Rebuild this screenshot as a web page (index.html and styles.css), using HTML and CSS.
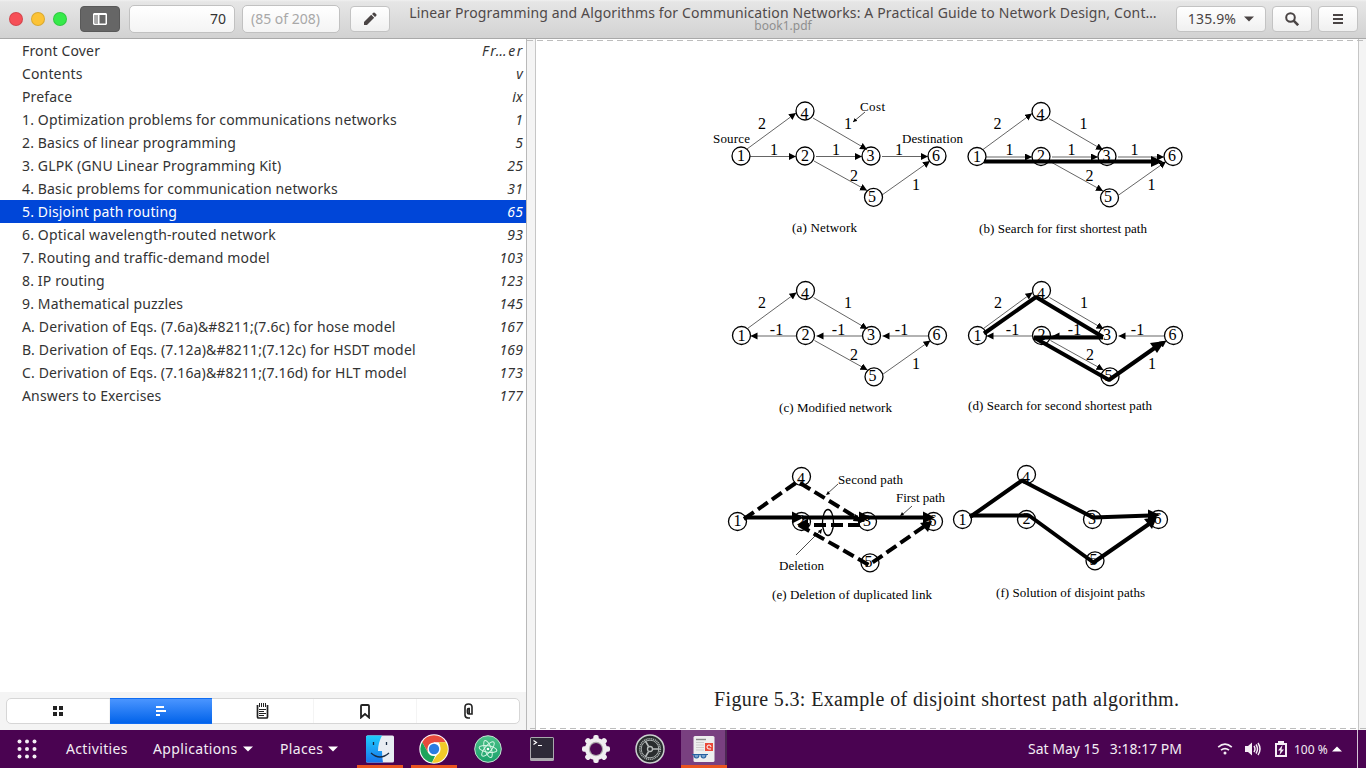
FILE: index.html
```html
<!DOCTYPE html>
<html lang="en">
<head>
<meta charset="utf-8">
<title>book1.pdf</title>
<link rel="stylesheet" href="styles.css">
</head>
<body>
<div class="screen">
  <header class="titlebar">
    <div class="lights"><i class="light red"></i><i class="light yellow"></i><i class="light green"></i></div>
    <button class="btn dark"><svg width="14" height="12" viewBox="0 0 14 12"><path fill="#fff" fill-rule="evenodd" d="M1 0h12l1 1v10l-1 1H1l-1-1V1zM1.500 2v8.500H5V2zM6.500 2v8.500h6V2z"/><path fill="#aaa" d="M2 2h3v8.500H2z"/></svg></button>
    <div class="entry page-no">70</div>
    <div class="entry page-total">(85 of 208)</div>
    <button class="btn pencil"><svg width="14" height="14" viewBox="0 0 14 14" fill="#4a4444"><path d="M1 13v-3l7.200-7.200 3 3L4 13zM9 2l1.300-1.300q.7-.6 1.400 0l1.600 1.600q.6.700 0 1.400L12 5z"/></svg></button>
    <div class="heading"><div class="doc-title">Linear Programming and Algorithms for Communication Networks: A Practical Guide to Network Design, Cont…</div><div class="doc-file">book1.pdf</div></div>
    <button class="btn zoom"><span>135.9%</span><svg width="10" height="6"><path fill="#4a4444" d="M0 .5h10L5 5.500z"/></svg></button>
    <button class="btn"><svg width="14" height="14" viewBox="0 0 14 14" fill="none" stroke="#4a4444"><circle cx="5.500" cy="5.500" r="4.300" stroke-width="2"/><path stroke-width="2.600" d="M8.600 8.600l4.600 4.600"/></svg></button>
    <button class="btn"><svg width="10" height="10" fill="#4a4444"><path d="M0 0h10v2H0zM0 4h10v2H0zM0 8h10v2H0z"/></svg></button>
  </header>

  <main class="work">
    <aside class="sidebar">
      <ul class="outline">
        <li><span>Front Cover</span><em class="short">Fr…er</em></li>
        <li><span>Contents</span><em>v</em></li>
        <li><span>Preface</span><em>ix</em></li>
        <li><span>1. Optimization problems for communications networks</span><em>1</em></li>
        <li><span>2. Basics of linear programming</span><em>5</em></li>
        <li><span>3. GLPK (GNU Linear Programming Kit)</span><em>25</em></li>
        <li><span>4. Basic problems for communication networks</span><em>31</em></li>
        <li class="selected"><span>5. Disjoint path routing</span><em>65</em></li>
        <li><span>6. Optical wavelength-routed network</span><em>93</em></li>
        <li><span>7. Routing and traffic-demand model</span><em>103</em></li>
        <li><span>8. IP routing</span><em>123</em></li>
        <li><span>9. Mathematical puzzles</span><em>145</em></li>
        <li><span>A. Derivation of Eqs. (7.6a)&amp;#8211;(7.6c) for hose model</span><em>167</em></li>
        <li><span>B. Derivation of Eqs. (7.12a)&amp;#8211;(7.12c) for HSDT model</span><em>169</em></li>
        <li><span>C. Derivation of Eqs. (7.16a)&amp;#8211;(7.16d) for HLT model</span><em>173</em></li>
        <li><span>Answers to Exercises</span><em>177</em></li>
      </ul>
      <div class="switcher-wrap"><div class="switcher">
        <div class="tab"><svg width="10" height="10" fill="#222"><path d="M0 0h4v4H0zM6 0h4v4H6zM0 6h4v4H0zM6 6h4v4H6z"/></svg></div>
        <div class="tab active"><svg width="10" height="10" fill="#fff"><path d="M0 0h8v2H0zM0 4h10v2H0zM0 8h4v2H0z"/></svg></div>
        <div class="tab"><svg width="13" height="16" viewBox="0 0 13 16" fill="none" stroke="#222"><path stroke-width="1.700" d="M1.500 2v12q0 1 1 1h8q1 0 1-1V2"/><path d="M3.500 0v4M5.500 0v4M7.500 0v4M9.500 0v4M3 6.500h7M3 8.500h5M3 10.500h7M3 12.500h5"/></svg></div>
        <div class="tab"><svg width="10" height="15" viewBox="0 0 10 15" fill="none" stroke="#222" stroke-width="1.800"><path d="M1 13.500V2q0-1 1-1h6q1 0 1 1v11.500L5 10z"/></svg></div>
        <div class="tab"><svg width="9" height="16" viewBox="0 0 9 16" fill="none" stroke="#222" stroke-width="1.600"><path d="M6 15H4q-3-.3-3-3V4q0-3 3.500-3T8 4v7H5.200V5.500H4.500Q3.400 5.500 3.400 7v2.500q0 1.500 1.600 1.500"/></svg></div>
      </div></div>
    </aside>

    <section class="viewer">
      <svg class="sheet" width="839" height="691" viewBox="527 39 839 691">
        <defs>
          <marker id="thin" markerUnits="userSpaceOnUse" markerWidth="8" markerHeight="8" refX="7" refY="3.500" orient="auto"><path d="M0 0l7 3.500-7 3.500z"/></marker>
          <marker id="bold" markerUnits="userSpaceOnUse" markerWidth="13" markerHeight="12" refX="2" refY="5.500" orient="auto"><path d="M0 0l12 5.500L0 11z"/></marker>
          <marker id="tiny" markerUnits="userSpaceOnUse" markerWidth="5" markerHeight="4" refX="4" refY="2" orient="auto"><path d="M0 0l4 2-4 2z"/></marker>
          <g id="nodes" class="node"><circle cx="741" cy="156" r="9"/><circle cx="805" cy="156" r="9"/><circle cx="871" cy="156" r="9"/><circle cx="805" cy="111" r="9"/><circle cx="873.500" cy="197.300" r="9"/><circle cx="937" cy="156" r="9"/></g>
          <g id="diagonals" class="link"><path d="M747 149L796 113"/><path d="M813 118L867 149.500"/><path d="M814 161L867 190.500"/><path d="M882 195L930 161"/></g>
          <g id="digits" class="num"><text x="741" y="161">1</text><text x="805" y="160.500">2</text><text x="870.500" y="160.500">3</text><text x="804.500" y="119">4</text><text x="872" y="201.500">5</text><text x="936" y="160.500">6</text></g>
          <g id="outer" class="num"><text x="762" y="129">2</text><text x="848" y="129">1</text><text x="854" y="181">2</text><text x="916" y="190">1</text></g>
          <g id="inner" class="num"><text x="774" y="155">1</text><text x="836" y="155">1</text><text x="899" y="155">1</text></g>
          <g id="forward" class="link"><path d="M750 156.500H796"/><path d="M816 156.500H862"/><path d="M882 156.500H928"/></g>
          <g id="back"><g class="link"><path d="M796 156.500H750"/><path d="M862 156.500H816"/><path d="M928 156.500H882"/></g><g class="num"><text x="776" y="155">-1</text><text x="838" y="155">-1</text><text x="901" y="155">-1</text></g></g>
        </defs>
        <rect x="535" y="39" width="823" height="691" fill="#fff"/>
        <path d="M535.500 39v691M1358.500 39v691" stroke="#c6c6c6"/>
        <path d="M527 40.500h839M530 728.500h836" stroke="#bdbdbd" stroke-dasharray="6 4"/>

        <g id="fig-a"><use href="#nodes"/><use href="#diagonals"/><use href="#forward"/><use href="#digits"/><use href="#outer"/><use href="#inner"/>
          <g class="cap"><text x="713" y="143" textLength="37">Source</text><text x="860" y="111" textLength="25">Cost</text><text x="902" y="143" textLength="61">Destination</text><text x="792" y="232" textLength="65">(a) Network</text></g>
          <path d="M865 112l-12 10" stroke="#000" stroke-width=".7" marker-end="url(#tiny)"/></g>

        <g id="fig-b"><g transform="translate(236 .5)"><use href="#nodes"/><use href="#diagonals"/><use href="#forward"/><use href="#digits"/></g><use href="#outer" x="235.500"/><use href="#inner" x="235.500"/>
          <path class="thick" d="M984 161.500H1153" marker-end="url(#bold)"/><g class="cap"><text x="979" y="233" textLength="168">(b) Search for first shortest path</text></g></g>

        <g id="fig-c"><g transform="translate(.5 179.500)"><use href="#nodes"/><use href="#diagonals"/><use href="#back"/><use href="#digits"/></g><use href="#outer" y="179"/>
          <g class="cap"><text x="779" y="412" textLength="113">(c) Modified network</text></g></g>

        <g id="fig-d"><g transform="translate(236.500 179.500)"><use href="#nodes"/><use href="#diagonals"/><use href="#back"/><use href="#digits"/></g><use href="#outer" x="236" y="179"/>
          <path class="thick" d="M984 333.500L1036 297L1103 337"/><path class="thick" d="M1103 337.500H1034L1109 380L1156 347" /><path d="M1165 341l-8 12-7-10z"/>
          <g class="cap"><text x="968" y="410" textLength="184">(d) Search for second shortest path</text></g></g>

        <g id="fig-e"><use href="#nodes" x="-3.500" y="365.500"/><use href="#digits" x="-3.500" y="365"/>
          <path class="thick" d="M744 517.500H792M802 517.500H858M868 517.500H924"/><path d="M792 511.500l12 6-12 6zM859 511.500l12 6-12 6zM923 511.500l12 6-12 6z"/>
          <path class="thick dash" d="M744 519L800 480"/><path class="thick dash" d="M800 483L862 521"/><path class="thick dash" d="M860 525H807"/><path class="thick dash" d="M799 525L869 565L926 525"/>
          <path d="M797 524.500l11-6v12zM932 521l-4 11-8-9zM855 514l10 8-12-1z"/>
          <ellipse cx="828" cy="522.500" rx="5.500" ry="13" fill="none" stroke="#000" stroke-width="1.300"/>
          <path d="M796 555L822 529M838 484l-11 10M912 506l-10 9" stroke="#000" stroke-width=".7"/><path d="M822 529l-1 5-3-3zM826 495l2-4 2 3zM900 516l2-4 2 3z"/>
          <g class="cap"><text x="838" y="484" textLength="65">Second path</text><text x="896" y="502" textLength="49">First path</text><text x="779" y="570" textLength="45">Deletion</text><text x="772" y="599" textLength="160">(e) Deletion of duplicated link</text></g></g>

        <g id="fig-f"><use href="#nodes" x="221.500" y="363.500"/><use href="#digits" x="221.500" y="363.500"/>
          <path class="thick" d="M970 517L1022 480.500L1093 517.500L1150 515.500"/><path class="thick" d="M970 515.500H1029L1093.500 562.500L1149 524"/>
          <path d="M1148 509.500l12 5.500-12 6zM1157 517l-5 12-8-10z"/>
          <g class="cap"><text x="996" y="597" textLength="149">(f) Solution of disjoint paths</text></g></g>

        <text class="figure-title" x="714" y="706" textLength="465">Figure 5.3: Example of disjoint shortest path algorithm.</text>
      </svg>
    </section>
  </main>

  <footer class="panel">
    <svg class="grid-icon" width="20" height="20" fill="#f5f0f5"><g id="dots"><circle cx="2.500" cy="2.500" r="2"/><circle cx="10" cy="2.500" r="2"/><circle cx="17.500" cy="2.500" r="2"/></g><use href="#dots" y="7.500"/><use href="#dots" y="15"/></svg>
    <span class="menu activities">Activities</span>
    <span class="menu applications">Applications</span><svg class="caret" width="10" height="6"><path fill="#fff" d="M0 .5h10L5 5.500z"/></svg>
    <span class="menu places">Places</span><svg class="caret" width="10" height="6"><path fill="#fff" d="M0 .5h10L5 5.500z"/></svg>
    <nav class="dock">
      <div class="app running"><svg width="30" height="30" viewBox="0 0 30 30"><defs><linearGradient id="fb" x2="0" y2="1"><stop stop-color="#1fcdfc"/><stop offset="1" stop-color="#1976ed"/></linearGradient></defs><rect x="1" y="1.500" width="28" height="27" rx="1.500" fill="#e9edf3"/><path fill="url(#fb)" d="M2.500 1.500H17Q13 9 13 17h4q0 6 1 11.500H2.500Q1 28.500 1 27V3q0-1.500 1.500-1.500z"/><path d="M8.500 8v3M21.500 8v3M6 19q9 8 18 0" fill="none" stroke="#172a42" stroke-width="1.300"/></svg></div>
      <div class="app running"><svg width="30" height="30" viewBox="0 0 30 30"><circle cx="15" cy="15" r="14.700" fill="#fff"/><path fill="#e94b3c" d="M3.200 8.200a13.600 13.600 0 0 1 23.600 0H15L9 18.500z"/><path fill="#1da45b" d="M3.200 8.200L9 18.500q2 4 7 3.500l-3 6.500A13.600 13.600 0 0 1 3.200 8.200z"/><path fill="#f2ca28" d="M26.800 8.200A13.600 13.600 0 0 1 13 28.500L20.500 17q2-5-1-8.800z"/><circle cx="15" cy="15" r="6.600" fill="#fff"/><circle cx="15" cy="15" r="5.200" fill="#2b7de2"/></svg></div>
      <div class="app"><svg width="30" height="30" viewBox="0 0 30 30"><defs><linearGradient id="at" x2="0" y2="1"><stop stop-color="#4ec28a"/><stop offset="1" stop-color="#19a06a"/></linearGradient></defs><circle cx="15" cy="15" r="13.300" fill="url(#at)" stroke="#c6dfd2"/><g fill="none" stroke="#d5f5e4"><ellipse cx="15" cy="15" rx="3.200" ry="9" transform="rotate(-20 15 15)"/><ellipse cx="15" cy="15" rx="3.200" ry="9" transform="rotate(40 15 15)"/><ellipse cx="15" cy="15" rx="3.200" ry="9" transform="rotate(100 15 15)"/></g><circle cx="15" cy="15" r="1.300" fill="#fff"/></svg></div>
      <div class="app"><svg width="30" height="30" viewBox="0 0 30 30"><rect x="3" y="3" width="24" height="24" rx="1.500" fill="#aaa9ad"/><rect x="4" y="4" width="22" height="20" fill="#2e2a38"/><path d="M6.500 6.500l3 2-3 2M11 11.500h4" fill="none" stroke="#fff" stroke-width="1.200"/></svg></div>
      <div class="app"><svg width="30" height="30" viewBox="0 0 30 30"><g fill="#f0eef0"><g id="teeth"><rect x="12.300" y="1" width="5.400" height="28" rx="2"/><rect x="1" y="12.300" width="28" height="5.400" rx="2"/></g><use href="#teeth" transform="rotate(45 15 15)"/><circle cx="15" cy="15" r="11"/></g><circle cx="15" cy="15" r="7.200" fill="#aba8aa"/><circle cx="15" cy="15" r="6" fill="#4d0853"/></svg></div>
      <div class="app"><svg width="30" height="30" viewBox="0 0 30 30"><circle cx="15" cy="15" r="14" fill="#292c2e" stroke="#cbd0cf" stroke-width="1.500"/><circle cx="15" cy="15" r="10.300" fill="none" stroke="#a7acac" stroke-width="1.600" stroke-dasharray="1.200 .7"/><circle cx="15" cy="15" r="8.800" fill="none" stroke="#a7acac"/><circle cx="15" cy="15" r="2.500" fill="none" stroke="#b8bcbc" stroke-width="1.300"/><path d="M17.500 15h7M13.500 12.400l-3.200-5.500M13.500 17.600l-3.200 5.500" stroke="#b8bcbc" stroke-width="1.700"/></svg></div>
      <div class="app running current"><svg width="30" height="30" viewBox="0 0 30 30"><rect x="4.500" y="2" width="21" height="26" rx="1.500" fill="#eee"/><path d="M7 5.500h10" stroke="#888" stroke-width="1.400"/><path d="M7 8.500h8M7 11h8M7 13.500h8M7 16h8" stroke="#ccc"/><rect x="16" y="9" width="8" height="8" fill="#ea4939"/><path d="M22 15h-2a2 2 0 1 1 2-2" fill="none" stroke="#fff"/><path d="M3 20.500h16M5 20.500q0 3.500 2.500 3.500t2.500-3.500M12 20.500q0 3.500 2.500 3.500t2.500-3.500" fill="#79a4d0" stroke="#265f9f" stroke-width="1.200"/></svg></div>
    </nav>
    <span class="clock"><span>Sat May 15</span><span>3:18:17 PM</span></span>
    <svg class="wifi" width="16" height="12" viewBox="0 0 16 12" fill="none" stroke="#f5eef5" stroke-width="1.700"><path d="M1.200 4.200q6.800-6 13.600 0M4 7.200q4-3.200 8 0"/><circle cx="8" cy="10" r="1.500" fill="#f5eef5" stroke="none"/></svg>
    <svg class="volume" width="16" height="14" viewBox="0 0 16 14"><path fill="#f5eef5" d="M0 4h3l4-3.500v13L3 10H0z"/><path d="M9 4q2 3 0 6M11 2.500q3 4.500 0 9M13 1q4 6 0 12" fill="none" stroke="#f5eef5" stroke-width="1.500"/></svg>
    <svg class="battery" width="12" height="16" viewBox="0 0 12 16"><path fill="#f5eef5" fill-rule="evenodd" d="M3 0h6v2h3v14H0V2h3zM2 4v10h8V4z"/><path fill="#f5eef5" d="M7.500 4L3 9.500h2.500L4.500 14 9 8.500H6.500z"/></svg>
    <span class="percent">100 %</span>
    <svg class="up" width="10" height="6"><path fill="#fff" d="M0 5.500h10L5 .5z"/></svg>
    <i class="edge"></i>
  </footer>
</div>
</body>
</html>
```
FILE: styles.css
```css
* { box-sizing: border-box; }
body { margin: 0; overflow: hidden; font-family: "Noto Sans", "Open Sans", sans-serif; font-size: 14px; color: #333; }
.screen { width: 1366px; height: 768px; display: flex; flex-direction: column; }
svg { display: block; flex: none; }
.titlebar { height: 39px; flex: none; display: flex; align-items: center; padding: 0 8px 1px 9px; background: linear-gradient(#f0f0f0, #e6e6e6 5%, #d2d2d2); border-bottom: 1px solid #a9a9a9; }
.lights { display: flex; gap: 8px; margin-right: 13px; }
.light { width: 14px; height: 14px; border-radius: 50%; border: 1px solid #0002; }
.red { background: #f64f57; }
.yellow { background: #fcc336; }
.green { background: #36ea4a; }
.btn { width: 40px; height: 26px; flex: none; padding: 0; display: flex; align-items: center; justify-content: center; border: 1px solid #c3c3c3; border-radius: 4px; background: linear-gradient(#fff, #f0f0f0); font: inherit; color: #4a4444; }
.btn + .btn { margin-left: 6px; }
.btn.dark { background: #666; border-color: #595959; }
.btn.pencil { margin-left: 10px; }
.btn.zoom { width: 90px; gap: 8px; letter-spacing: .15px; }
.entry { height: 28px; border: 1px solid #c1c1c1; border-radius: 5px; background: linear-gradient(#fff, #f4f4f4); line-height: 26px; font-size: 14px; }
.page-no { width: 106px; margin-left: 9px; padding-right: 8px; text-align: right; }
.page-total { width: 98px; margin-left: 7px; padding-left: 8px; color: #a8a8a8; }
.heading { flex: 1; min-width: 0; height: 38px; display: flex; flex-direction: column; align-items: center; white-space: nowrap; }
.doc-title { font-size: 14px; line-height: 16px; margin-top: 5px; letter-spacing: .142px; color: #4f4949; }
.doc-file { font-size: 12px; line-height: 12px; margin-top: -1px; color: #8f8f8f; }
.work { height: 691px; display: flex; }
.sidebar { width: 527px; flex: none; display: flex; flex-direction: column; border-right: 1px solid #b9b9b9; background: #fff; }
.outline { list-style: none; margin: 0; padding: 0; flex: 1; letter-spacing: .15px; }
.outline li { height: 23px; padding: 0 3px 0 22px; display: flex; justify-content: space-between; line-height: 23px; white-space: nowrap; }
.outline .short { letter-spacing: 1.600px; margin-right: -1px; }
.outline .selected { background: #0046d8; color: #fff; }
.switcher-wrap { height: 38px; padding: 6px 6px; background: #f4f4f4; }
.switcher { display: flex; height: 26px; border: 1px solid #d6d6d6; border-radius: 5px; background: #fff; }
.tab { flex: 1; display: flex; align-items: center; justify-content: center; border-right: 1px solid #f4f4f4; }
.tab:last-child { border: 0; }
.tab.active { margin: -1px 0; background: linear-gradient(#4a95ff, #0263ea); border: 1px solid #0f6cf2; border-width: 1px 0; }
.viewer { flex: 1; background: #f4f4f4; }
.node { fill: #fff; stroke: #000; stroke-width: 1.300; }
.link path { stroke: #222; stroke-width: .7; marker-end: url(#thin); }
.num { font: 16px "Liberation Serif", serif; text-anchor: middle; }
.cap { font: 13px "Liberation Serif", serif; }
.thick { fill: none; stroke: #000; stroke-width: 4; stroke-linejoin: bevel; }
.dash { stroke-dasharray: 12 5; }
.figure-title { font: 20px "Liberation Serif", serif; fill: #222; }
.panel { height: 38px; display: flex; align-items: center; padding-left: 17px; background: #4a0351; color: #f3edf4; font-size: 14px; white-space: nowrap; }
.menu { flex: none; letter-spacing: .35px; position: relative; top: -1px; }
.activities { width: 64px; margin-left: 29px; }
.applications { width: 85px; margin-left: 23px; }
.places { width: 43px; margin-left: 27px; }
.caret { margin-left: 5px; }
.dock { display: flex; height: 38px; margin-left: 19px; gap: 8px; }
.app { width: 46px; height: 38px; display: flex; justify-content: center; padding-top: 4px; border-bottom: 3px solid transparent; }
.running { border-color: #e95420; }
.current { background: #794080; box-shadow: inset -2px 0 #4c2853; }
.clock { width: 154px; margin-left: 301px; display: flex; justify-content: space-between; position: relative; top: -1px; }
.wifi { margin-left: 35px; }
.volume { margin-left: 12px; }
.battery { margin-left: 14px; }
.percent { width: 33px; margin-left: 7px; font-size: 12px; }
.up { margin-left: 5px; }
.edge { width: 1px; height: 38px; margin-left: 15px; background: #d5c5d7; }
```
